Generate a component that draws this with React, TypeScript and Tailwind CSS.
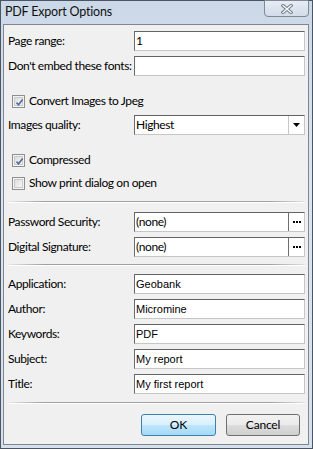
import React from "react";

const UI = { fontFamily: 'Lato, "Noto Sans", sans-serif' };
const FIELD = { fontFamily: '"Liberation Sans", Arial, sans-serif' };

function Label({ children }: { children: React.ReactNode }) {
  return (
    <div className="w-[126px] shrink-0 whitespace-nowrap text-[12px] tracking-[-0.4px] leading-none text-black" style={UI}>
      {children}
    </div>
  );
}

function TextBox({ value, ui }: { value?: string; ui?: boolean }) {
  return (
    <div
      className={`h-[20px] w-[171px] shrink-0 flex items-center bg-white border border-t-[#646464] border-l-[#6a6a6a] border-r-[#c6c6c6] border-b-[#c6c6c6] pl-[1px] text-black leading-none ${ui ? "tracking-[-0.4px]" : ""}`}
      style={ui ? { ...UI, fontSize: 12 } : { ...FIELD, fontSize: 11 }}
    >
      {value}
    </div>
  );
}

function Row({ label, children }: { label: string; children: React.ReactNode }) {
  return (
    <div className="h-[20px] flex items-center">
      <Label>{label}</Label>
      {children}
    </div>
  );
}

function Check({ checked, label }: { checked: boolean; label: string }) {
  return (
    <div className="h-[20px] flex items-center pl-[4px]">
      <div className="w-[13px] h-[13px] border border-[#8e8f8f] bg-[#f4f4f4] p-[1px] shrink-0">
        <div className="w-full h-full border border-[#c9c9c9] bg-gradient-to-br from-[#dcdcdc] to-[#f9f9f9] relative">
          {checked && (
            <svg viewBox="0 0 9 9" className="absolute left-[0px] top-[0px] w-[9px] h-[9px]">
              <path d="M1.5 4.6 L3.6 6.8 L7.6 1.4" fill="none" stroke="#56699c" strokeWidth="1.6" />
            </svg>
          )}
        </div>
      </div>
      <div className="ml-[4px] whitespace-nowrap text-[12px] tracking-[-0.4px] leading-none text-black" style={UI}>
        {label}
      </div>
    </div>
  );
}

function Sep() {
  return (
    <div className="w-[297px]">
      <div className="h-[1px] bg-[linear-gradient(to_right,rgba(160,160,160,0.1),#a0a0a0_12%,#a0a0a0_88%,rgba(160,160,160,0.2))]" />
      <div className="h-[1px] bg-white" />
    </div>
  );
}

function EllipsisBox({ value }: { value: string }) {
  return (
    <div className="h-[20px] w-[171px] shrink-0 flex items-stretch bg-white border border-t-[#646464] border-l-[#6a6a6a] border-r-[#c6c6c6] border-b-[#c6c6c6] text-black">
      <div className="flex-1 flex items-center pl-[1px] text-[12px] tracking-[-0.4px] leading-none" style={UI}>
        {value}
      </div>
      <div className="w-[16px] border-l border-[#6e6e6e] flex items-center justify-center gap-[1px] pb-[1px]">
        <span className="w-[2px] h-[2px] bg-black" />
        <span className="w-[2px] h-[2px] bg-black" />
        <span className="w-[2px] h-[2px] bg-black" />
      </div>
    </div>
  );
}

function SelectBox({ value }: { value: string }) {
  return (
    <div className="h-[20px] w-[171px] shrink-0 flex items-stretch bg-white border border-t-[#646464] border-l-[#6a6a6a] border-r-[#c6c6c6] border-b-[#c6c6c6] text-black">
      <div className="flex-1 flex items-center pl-[1px] text-[12px] tracking-[-0.4px] leading-none" style={UI}>
        {value}
      </div>
      <div className="w-[16px] border-l border-[#c6c6c6] flex items-center justify-center">
        <svg viewBox="0 0 7 4" className="w-[7px] h-[4px]">
          <path d="M0 0 H7 L3.5 4 Z" fill="#000" />
        </svg>
      </div>
    </div>
  );
}

export default function App() {
  return (
    <div className="w-[313px] h-[449px] border border-[#4b5563] bg-[linear-gradient(to_bottom,#cbd8e7,#dbe5f0_40%,#d5e0ec)] flex flex-col">
      <div className="h-[23px] flex items-start relative">
        <div className="pl-[4px] pt-[3px] text-[12.5px] tracking-[-0.2px] leading-[16px] text-[#111]" style={UI}>
          PDF Export Options
        </div>
        <div className="absolute right-[3px] top-[-1px] w-[45px] h-[17px] rounded-b-[4px] border border-[#7f8994] bg-[linear-gradient(to_bottom,#e6edf5,#d2dce8)] flex items-center justify-center">
          <svg viewBox="0 0 12 10" className="w-[12px] h-[10px]">
            <path d="M2 1.5 L10 8.5 M10 1.5 L2 8.5" stroke="#6b7682" strokeWidth="3.2" strokeLinecap="square" />
            <path d="M2 1.5 L10 8.5 M10 1.5 L2 8.5" stroke="#ffffff" strokeWidth="1.4" strokeLinecap="square" />
          </svg>
        </div>
      </div>
      <div className="flex-1 ml-[2px] mr-[3px] mb-[3px] border border-[#7d8793] bg-[#f0f0f0] pl-[4px] pr-[3px] flex flex-col">
        <div className="mt-[6px]">
          <Row label="Page range:">
            <TextBox value="1" ui />
          </Row>
        </div>
        <div className="mt-[5px]">
          <Row label="Don't embed these fonts:">
            <TextBox />
          </Row>
        </div>
        <div className="mt-[15px]">
          <Check checked label="Convert Images to Jpeg" />
        </div>
        <div className="mt-[4px]">
          <Row label="Images quality:">
            <SelectBox value="Highest" />
          </Row>
        </div>
        <div className="mt-[15px]">
          <Check checked label="Compressed" />
        </div>
        <div className="mt-[3px]">
          <Check checked={false} label="Show print dialog on open" />
        </div>
        <div className="mt-[8px]">
          <Sep />
        </div>
        <div className="mt-[9px]">
          <Row label="Password Security:">
            <EllipsisBox value="(none)" />
          </Row>
        </div>
        <div className="mt-[5px]">
          <Row label="Digital Signature:">
            <EllipsisBox value="(none)" />
          </Row>
        </div>
        <div className="mt-[7px]">
          <Sep />
        </div>
        <div className="mt-[8px] flex flex-col gap-[5px]">
          <Row label="Application:">
            <TextBox value="Geobank" />
          </Row>
          <Row label="Author:">
            <TextBox value="Micromine" />
          </Row>
          <Row label="Keywords:">
            <TextBox value="PDF" />
          </Row>
          <Row label="Subject:">
            <TextBox value="My report" />
          </Row>
          <Row label="Title:">
            <TextBox value="My first report" />
          </Row>
        </div>
        <div className="mt-[8px]">
          <Sep />
        </div>
        <div className="mt-[10px] flex">
          <div
            className="ml-[133px] w-[75px] h-[22px] rounded-[3px] border border-[#3c7fb1] bg-[linear-gradient(to_bottom,#eaf6fd,#d9f0fc_50%,#bee6fd_50%,#a7d9f5)] flex items-center justify-center text-[12px] leading-none text-black"
            style={UI}
          >
            OK
          </div>
          <div
            className="ml-[10px] w-[74px] h-[22px] rounded-[3px] border border-[#707070] bg-[linear-gradient(to_bottom,#f2f2f2,#ebebeb_50%,#dddddd_50%,#cfcfcf)] flex items-center justify-center text-[12px] tracking-[-0.2px] leading-none text-black"
            style={UI}
          >
            Cancel
          </div>
        </div>
      </div>
    </div>
  );
}
